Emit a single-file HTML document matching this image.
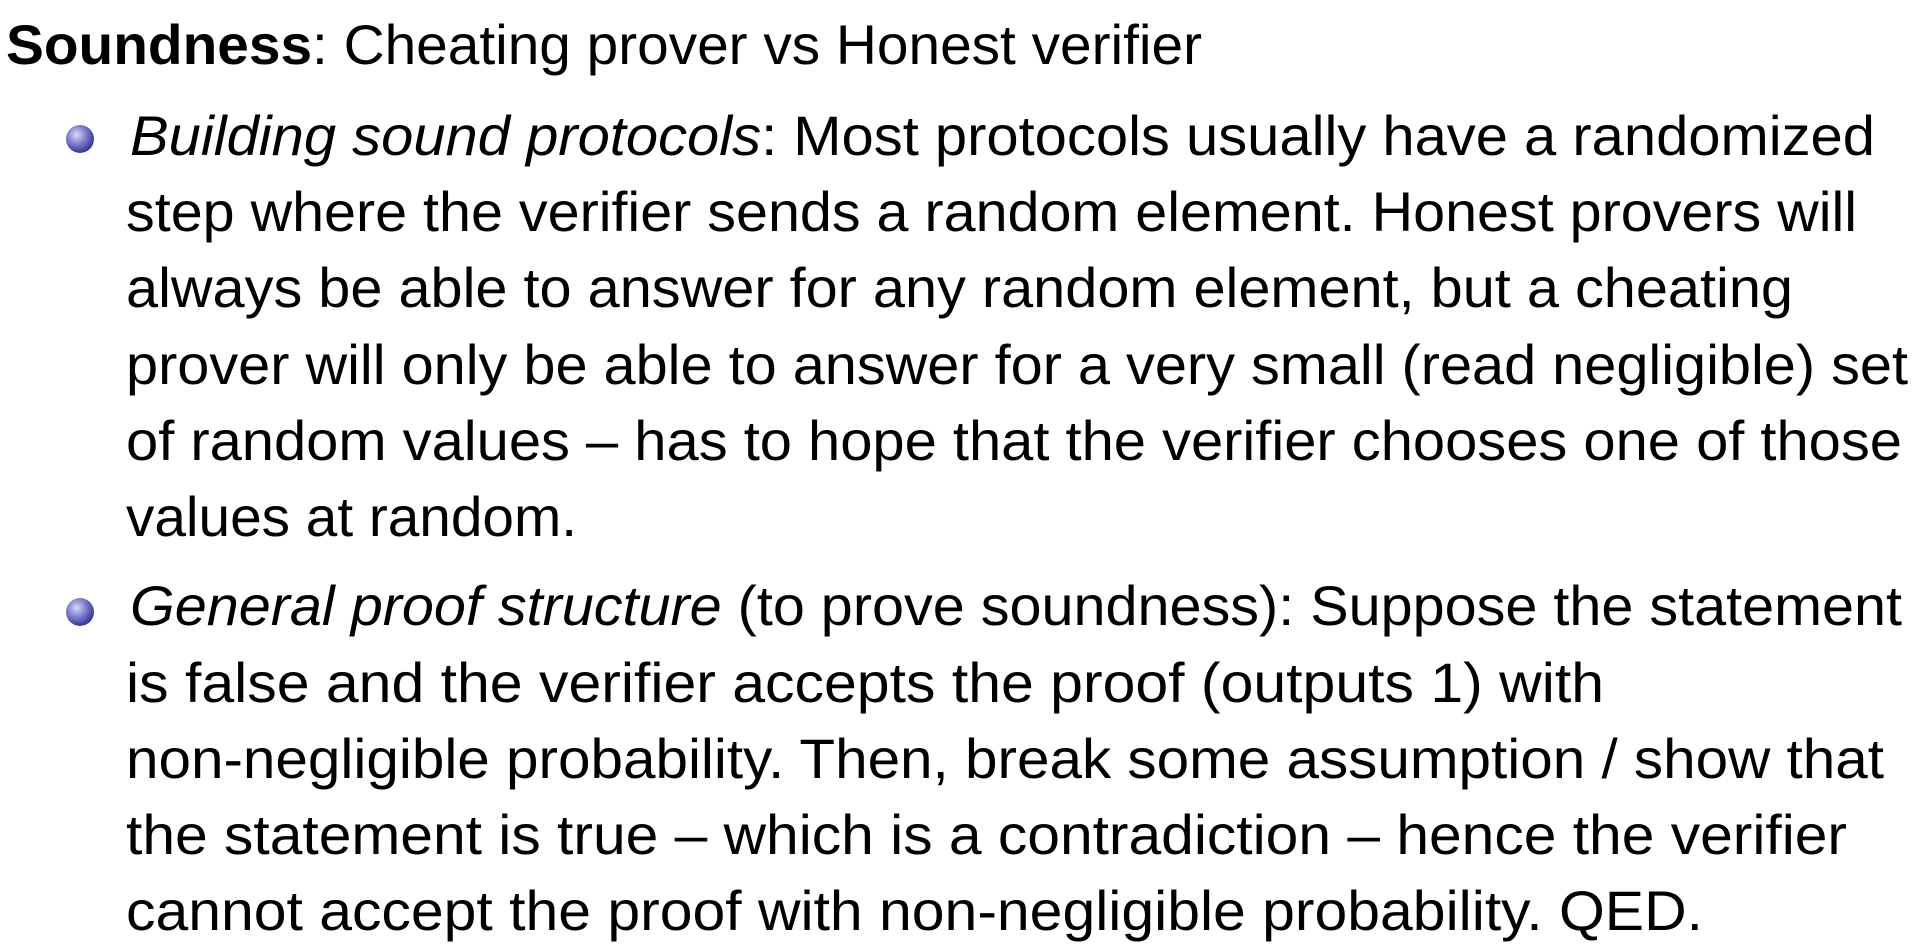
<!DOCTYPE html>
<html><head><meta charset="utf-8"><style>
html,body{margin:0;padding:0;background:#fff;width:1918px;height:944px;overflow:hidden}
svg{display:block}
text{font-family:"Liberation Sans",sans-serif;font-size:56px;fill:#000}
</style></head><body>
<svg width="1918" height="944" viewBox="0 0 1918 944" xmlns="http://www.w3.org/2000/svg">
<defs>
<radialGradient id="b" cx="0.38" cy="0.35" r="0.7">
<stop offset="0" stop-color="#d8d8f4"/>
<stop offset="0.5" stop-color="#7a7ad0"/>
<stop offset="1" stop-color="#2e2e8a"/>
</radialGradient>
</defs>
<text x="6" y="64" textLength="1196" lengthAdjust="spacingAndGlyphs"><tspan font-weight="bold">Soundness</tspan>: Cheating prover vs Honest verifier</text>
<circle cx="80" cy="139" r="14" fill="url(#b)"/>
<text x="130" y="155" textLength="1745" lengthAdjust="spacingAndGlyphs"><tspan font-style="italic">Building sound protocols</tspan>: Most protocols usually have a randomized</text>
<text x="126" y="231" textLength="1731" lengthAdjust="spacingAndGlyphs">step where the verifier sends a random element. Honest provers will</text>
<text x="126" y="307" textLength="1667" lengthAdjust="spacingAndGlyphs">always be able to answer for any random element, but a cheating</text>
<text x="126" y="384" textLength="1782" lengthAdjust="spacingAndGlyphs">prover will only be able to answer for a very small (read negligible) set</text>
<text x="126" y="460" textLength="1776" lengthAdjust="spacingAndGlyphs">of random values – has to hope that the verifier chooses one of those</text>
<text x="126" y="536" textLength="451" lengthAdjust="spacingAndGlyphs">values at random.</text>
<circle cx="80" cy="612" r="14" fill="url(#b)"/>
<text x="130" y="625" textLength="1772" lengthAdjust="spacingAndGlyphs"><tspan font-style="italic">General proof structure</tspan> (to prove soundness): Suppose the statement</text>
<text x="126" y="702" textLength="1478" lengthAdjust="spacingAndGlyphs">is false and the verifier accepts the proof (outputs 1) with</text>
<text x="126" y="778" textLength="1758" lengthAdjust="spacingAndGlyphs">non-negligible probability. Then, break some assumption / show that</text>
<text x="126" y="854" textLength="1721" lengthAdjust="spacingAndGlyphs">the statement is true – which is a contradiction – hence the verifier</text>
<text x="126" y="930" textLength="1577" lengthAdjust="spacingAndGlyphs">cannot accept the proof with non-negligible probability. QED.</text>
</svg>
</body></html>
